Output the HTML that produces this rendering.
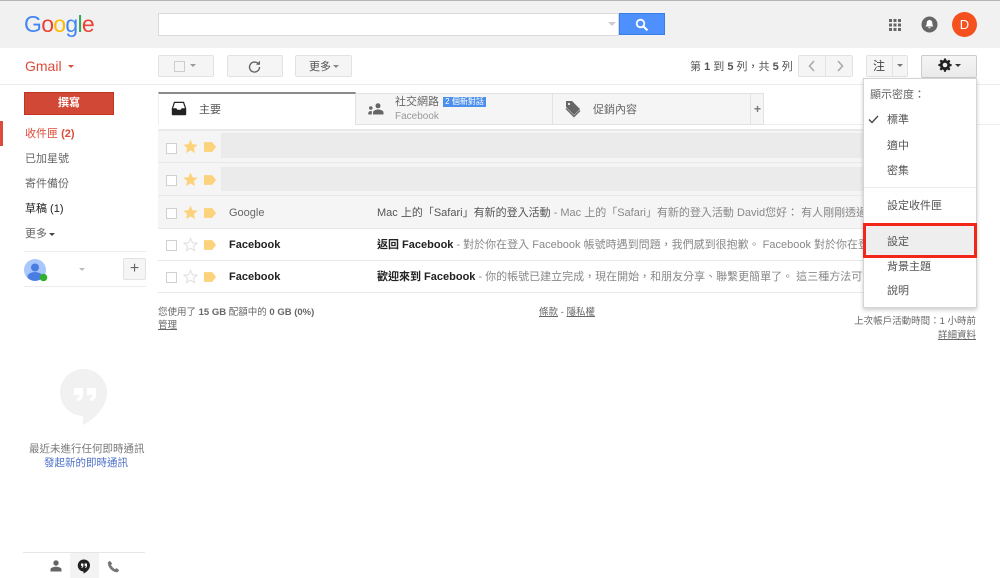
<!DOCTYPE html>
<html lang="zh-Hant"><head><meta charset="utf-8"><title>Gmail</title>
<style>
html,body{margin:0;padding:0;background:#fff}
body{width:1000px;height:578px;position:relative;overflow:hidden;font-family:"Liberation Sans","Noto Sans CJK TC",sans-serif;font-size:11px;color:#444}
.a{position:absolute}
.t{position:absolute;white-space:nowrap;line-height:14px}
.b{position:absolute;box-sizing:border-box;border:1px solid #e2e2e2;background:#f5f5f5;border-radius:2px}
.arr{position:absolute;width:0;height:0;border-left:3px solid transparent;border-right:3px solid transparent;border-top:3px solid #777}
.row{position:absolute;left:158px;width:706px;box-sizing:border-box;border-bottom:1px solid #e8e8e8}
.cb{position:absolute;left:8px;width:9px;height:9px;border:1px solid #d0d0d0;background:#fff}
.star{position:absolute;left:25px}
.lb{position:absolute;left:46px}
.g{color:#888}
.m{left:887px;color:#555;font-size:11px}
.f{color:#666;font-size:9.5px}
u{text-decoration:underline}
</style></head><body>
<div class="a" style="left:0;top:0;width:1000px;height:48px;background:#f1f1f1;border-top:1px solid #b5b5b5;box-sizing:border-box"></div>
<div class="t" style="left:24px;top:9px;font-size:23px;line-height:30px;letter-spacing:-.7px"><span style="color:#4285f4">G</span><span style="color:#ea4335">o</span><span style="color:#fbbc05">o</span><span style="color:#4285f4">g</span><span style="color:#34a853">l</span><span style="color:#ea4335">e</span></div>

<div class="a" style="left:158px;top:13px;width:461px;height:23px;background:#fff;border:1px solid #d9d9d9;box-sizing:border-box"></div>
<div class="arr" style="left:608px;top:22px;border-top-color:#ccc;border-left-width:4px;border-right-width:4px;border-top-width:4px"></div>
<div class="a" style="left:619px;top:13px;width:46px;height:22px;background:#4d90fe;border:1px solid #3b7de8;box-sizing:border-box"></div>
<svg class="a" style="left:635px;top:18px" width="14" height="14" viewBox="0 0 14 14"><circle cx="5.500" cy="5.500" r="3.800" fill="none" stroke="#fff" stroke-width="1.800"/><path d="M8.400 8.400L12.400 12.400" stroke="#fff" stroke-width="2.200"/></svg>

<svg class="a" style="left:888px;top:18px" width="14" height="14" viewBox="0 0 14 14" fill="#666"><path d="M1 1h3v3H1zM5.500 1h3v3h-3zM10 1h3v3h-3zM1 5.500h3v3H1zM5.500 5.500h3v3h-3zM10 5.500h3v3h-3zM1 10h3v3H1zM5.500 10h3v3h-3zM10 10h3v3h-3z"/></svg>
<svg class="a" style="left:921px;top:16px" width="17" height="17" viewBox="0 0 17 17"><circle cx="8.500" cy="8.500" r="8" fill="#666"/><path d="M8.500 4c-2 0-2.800 1.500-2.800 3.300 0 1.700-.7 2.500-1.200 3.200h8c-.5-.7-1.200-1.500-1.200-3.200C11.300 5.500 10.500 4 8.500 4z" fill="#fff"/><path d="M7.300 11.200h2.400a1.200 1.200 0 0 1-2.400 0z" fill="#fff"/></svg>
<div class="a" style="left:952px;top:12px;width:25px;height:25px;border-radius:50%;background:#f4511e;color:#fff;font-size:13px;line-height:25px;text-align:center">D</div>

<div class="t" style="left:25px;top:57px;font-size:14px;line-height:18px;color:#dd4b39">Gmail</div>
<div class="arr" style="left:68px;top:65px;border-top-color:#dd4b39"></div>
<div class="a" style="left:0;top:84px;width:1000px;height:1px;background:#ebebeb"></div>

<div class="b" style="left:158px;top:55px;width:56px;height:22px"></div>
<div class="a" style="left:174px;top:61px;width:9px;height:9px;border:1px solid #ccc;background:#f5f5f5"></div>
<div class="arr" style="left:190px;top:64px;border-top-color:#999"></div>
<div class="b" style="left:227px;top:55px;width:56px;height:22px"></div>
<svg class="a" style="left:248px;top:60px" width="13" height="13" viewBox="0 0 13 13"><path d="M10.800 4.500A5 5 0 1 0 11.500 7" fill="none" stroke="#666" stroke-width="1.400"/><path d="M8 4.800h4V.8z" fill="#666"/></svg>
<div class="b" style="left:295px;top:55px;width:57px;height:22px"></div>
<div class="t" style="left:309px;top:60px;color:#555">更多</div>
<div class="arr" style="left:333px;top:65px;border-top-color:#888"></div>

<div class="t" style="left:690px;top:60px;color:#555;font-size:11px">第 <b>1</b> 到 <b>5</b> 列，共 <b>5</b> 列</div>
<div class="b" style="left:798px;top:55px;width:55px;height:22px"></div>
<div class="a" style="left:825px;top:55px;width:1px;height:22px;background:#e2e2e2"></div>
<svg class="a" style="left:807px;top:60px" width="38" height="12" viewBox="0 0 38 12" fill="none" stroke="#aaa" stroke-width="1.600"><path d="M7 1L2.500 6 7 11M31 1l4.500 5-4.500 5"/></svg>
<div class="b" style="left:866px;top:55px;width:42px;height:22px"></div>
<div class="a" style="left:892px;top:55px;width:1px;height:22px;background:#e2e2e2"></div>
<div class="t" style="left:873px;top:59px;font-size:12px;color:#444">注</div>
<div class="arr" style="left:897px;top:64px"></div>
<div class="b" style="left:921px;top:55px;width:56px;height:23px;border-color:#ccc;background:linear-gradient(#f5f5f5,#eaeaea)"></div>
<svg class="a" style="left:938px;top:58px" width="14" height="14" viewBox="0 0 14 14"><path d="M6 .5h2l.3 1.700 1.200.5 1.500-1 1.400 1.400-1 1.500.5 1.200 1.700.3v2l-1.700.3-.5 1.200 1 1.500-1.400 1.400-1.500-1-1.200.5-.3 1.700H6l-.3-1.700-1.200-.5-1.500 1-1.400-1.400 1-1.500-.5-1.200L.4 8V6l1.700-.3.500-1.200-1-1.500L3 1.600l1.500 1 1.200-.5z" fill="#222"/><circle cx="7" cy="7" r="2.300" fill="#f0f0f0"/></svg>
<div class="arr" style="left:955px;top:64px;border-top-color:#333"></div>

<!-- sidebar -->
<div class="a" style="left:24px;top:92px;width:90px;height:23px;background:#d14836;border:1px solid #c23321;box-sizing:border-box;color:#fff;font-weight:bold;text-align:center;line-height:21px;font-size:11px">撰寫</div>
<div class="a" style="left:0;top:121px;width:3px;height:25px;background:#dd4b39"></div>
<div class="t" style="left:25px;top:127px;color:#dd4b39">收件匣 <b>(2)</b></div>
<div class="t" style="left:25px;top:152px;color:#666">已加星號</div>
<div class="t" style="left:25px;top:177px;color:#666">寄件備份</div>
<div class="t" style="left:25px;top:202px;color:#222">草稿 (1)</div>
<div class="t" style="left:25px;top:227px;color:#666">更多</div>
<div class="arr" style="left:49px;top:233px;border-top-color:#444"></div>
<div class="a" style="left:24px;top:251px;width:122px;height:1px;background:#ececec"></div>
<div class="a" style="left:24px;top:286px;width:122px;height:1px;background:#ececec"></div>
<svg class="a" style="left:23px;top:258px" width="27" height="26" viewBox="0 0 27 26"><defs><clipPath id="c"><circle cx="12" cy="12" r="11"/></clipPath></defs><circle cx="12" cy="12" r="11" fill="#a8c7fa"/><g clip-path="url(#c)" fill="#4a7de0"><circle cx="12" cy="9.500" r="4"/><ellipse cx="12" cy="18.500" rx="7.500" ry="4.500"/></g><circle cx="20.500" cy="19.500" r="3.800" fill="#2fb12f"/></svg>
<div class="arr" style="left:79px;top:268px;border-top-color:#bbb"></div>
<div class="b" style="left:123px;top:258px;width:23px;height:22px;font-size:16px;line-height:20px;color:#666;text-align:center">+</div>

<svg class="a" style="left:60px;top:368px" width="48" height="58" viewBox="0 0 48 58"><path d="M24 1a23.500 23.500 0 0 0-1 47v9c10-5 24-17 24-32.500A23.500 23.500 0 0 0 24 1z" fill="#f1f1f1"/><path d="M14 20h9v7c0 4-3 6-6 6v-3c1.500 0 2.500-1 2.500-3H14zM27 20h9v7c0 4-3 6-6 6v-3c1.500 0 2.500-1 2.500-3H27z" fill="#fff"/></svg>
<div class="t" style="left:29px;top:442px;color:#777;font-size:10.500px">最近未進行任何即時通訊</div>
<div class="t" style="left:44px;top:456px;color:#4d6fc9;font-size:10.500px">發起新的即時通訊</div>
<div class="a" style="left:23px;top:552px;width:122px;height:1px;background:#e6e6e6"></div>
<div class="a" style="left:70px;top:553px;width:29px;height:25px;background:#f3f3f3"></div>
<svg class="a" style="left:49px;top:560px" width="14" height="12" viewBox="0 0 14 12" fill="#666"><circle cx="7" cy="3" r="2.700"/><path d="M1.500 11.500V9.500C1.500 7.500 5 6.800 7 6.800s5.500.7 5.500 2.700v2z"/></svg>
<svg class="a" style="left:77px;top:559px" width="14" height="15" viewBox="0 0 14 15"><path d="M7 .5a6 6 0 0 0-.5 12v2c3-1.200 6.500-4.500 6.500-8A6 6 0 0 0 7 .5z" fill="#222"/><path d="M4 4.500h2.400v2.400c0 1.400-1 2-1.900 2v-1c.5 0 .8-.3.800-1H4zM7.600 4.500H10v2.400c0 1.400-1 2-1.900 2v-1c.5 0 .8-.3.800-1H7.600z" fill="#fff"/></svg>
<svg class="a" style="left:107px;top:560px" width="13" height="13" viewBox="0 0 13 13"><path d="M2.800.8L.8 2.500c0 5 4.500 9.800 9.700 9.800l1.800-2-2.800-2.300-1.500 1.200C6.500 8.300 4.800 6.500 4 5l1.200-1.500z" fill="#777"/></svg>

<!-- tabs -->
<div class="a" style="left:158px;top:92px;width:198px;height:33px;background:#fff;border-top:2px solid #8a8a8a;border-left:1px solid #eee;border-right:1px solid #e2e2e2;box-sizing:border-box"></div>
<div class="a" style="left:356px;top:93px;width:408px;height:32px;background:#f5f5f5;border:1px solid #e2e2e2;border-left:none;box-sizing:border-box"></div>
<div class="a" style="left:552px;top:93px;width:1px;height:32px;background:#e2e2e2"></div>
<div class="a" style="left:750px;top:93px;width:1px;height:32px;background:#e2e2e2"></div>
<div class="a" style="left:764px;top:124px;width:236px;height:1px;background:#eee"></div>
<svg class="a" style="left:171px;top:101px" width="16" height="15" viewBox="0 0 16 15"><path d="M3 .8h10l2.200 6.700v5.500a1.300 1.300 0 0 1-1.300 1.300H2.100A1.300 1.300 0 0 1 .8 13V7.500z" fill="#222"/><path d="M3.900 2h8.200l1.800 5.200h-3.300l-.9 1.600H6.300l-.9-1.600H2.100z" fill="#fff"/></svg>
<div class="t" style="left:199px;top:103px;color:#555">主要</div>
<svg class="a" style="left:368px;top:103px" width="16" height="12" viewBox="0 0 16 12" fill="#666"><circle cx="10" cy="2.800" r="2.500"/><path d="M5 11.500V9.500C5 7.300 8.500 6.500 10 6.500s5.500.8 5.500 3v2z"/><circle cx="2.800" cy="5" r="1.800"/><path d="M.3 11.500V10c0-1.400 1.500-2 3.500-2v3.500z"/></svg>
<div class="t" style="left:395px;top:95px;color:#666">社交網路</div>
<div class="a" style="left:443px;top:97px;width:43px;height:10px;background:#4d8fec;color:#fff;font-size:8px;line-height:10px;text-align:center;white-space:nowrap;overflow:hidden">2 個新對話</div>
<div class="t" style="left:395px;top:110px;color:#999;font-size:10px">Facebook</div>
<svg class="a" style="left:565px;top:100px" width="17" height="18" viewBox="0 0 17 18"><path d="M1 1h6l8 8-6 6-8-8z" fill="#666"/><circle cx="4" cy="4" r="1.100" fill="#f5f5f5"/><path d="M1 8.500l8 8 6-6" fill="none" stroke="#666" stroke-width="1.400"/></svg>
<div class="t" style="left:593px;top:103px;color:#666">促銷內容</div>
<div class="a" style="left:751px;top:93px;width:13px;height:32px;color:#777;font-weight:bold;font-size:12px;line-height:32px;text-align:center">+</div>

<!-- rows -->
<div class="a" style="left:158px;top:129px;width:706px;height:2px;background:#e9e9e9"></div>
<div class="row" style="top:131px;height:32px;background:#f5f5f5"><div class="cb" style="top:12px"></div><svg class="star" style="top:8px" width="15" height="15" viewBox="0 0 13 13"><path d="M6.500.5l1.800 4.100 4.400.4-3.300 2.900 1 4.300-3.900-2.300-3.900 2.300 1-4.300L.3 5l4.400-.4z" fill="#fcd27a"/></svg><svg class="lb" style="top:11px" width="12" height="10" viewBox="0 0 11 9"><path d="M0 0h7.500L11 4.500 7.500 9H0z" fill="#fcd27a"/></svg><div class="a" style="left:63px;top:2px;width:643px;height:25px;background:#ebebeb"></div></div>
<div class="row" style="top:163px;height:33px;background:#f5f5f5"><div class="cb" style="top:12px"></div><svg class="star" style="top:9px" width="15" height="15" viewBox="0 0 13 13"><path d="M6.500.5l1.800 4.100 4.400.4-3.300 2.900 1 4.300-3.900-2.300-3.900 2.300 1-4.300L.3 5l4.400-.4z" fill="#fcd27a"/></svg><svg class="lb" style="top:12px" width="12" height="10" viewBox="0 0 11 9"><path d="M0 0h7.500L11 4.500 7.500 9H0z" fill="#fcd27a"/></svg><div class="a" style="left:63px;top:4px;width:643px;height:24px;background:#ebebeb"></div></div>
<div class="row" style="top:196px;height:33px;background:#f5f5f5"><div class="cb" style="top:12px"></div><svg class="star" style="top:9px" width="15" height="15" viewBox="0 0 13 13"><path d="M6.500.5l1.800 4.100 4.400.4-3.300 2.900 1 4.300-3.900-2.300-3.900 2.300 1-4.300L.3 5l4.400-.4z" fill="#fcd27a"/></svg><svg class="lb" style="top:12px" width="12" height="10" viewBox="0 0 11 9"><path d="M0 0h7.500L11 4.500 7.500 9H0z" fill="#fcd27a"/></svg></div>
<div class="t" style="left:229px;top:206px;color:#666">Google</div>
<div class="t" style="left:377px;top:206px;width:487px;overflow:hidden;color:#555">Mac 上的「Safari」有新的登入活動<span class="g"> - Mac 上的「Safari」有新的登入活動 David您好： 有人剛剛透過</span></div>
<div class="row" style="top:229px;height:32px;background:#fff"><div class="cb" style="top:11px"></div><svg class="star" style="top:8px" width="15" height="15" viewBox="0 0 13 13"><path d="M6.500 1.200l1.600 3.700 4 .4-3 2.600.9 3.900-3.500-2.100-3.500 2.100.9-3.900-3-2.600 4-.4z" fill="#fff" stroke="#e2e2e2"/></svg><svg class="lb" style="top:11px" width="12" height="10" viewBox="0 0 11 9"><path d="M0 0h7.500L11 4.500 7.500 9H0z" fill="#fcd27a"/></svg></div>
<div class="t" style="left:229px;top:238px;color:#222;font-weight:bold">Facebook</div>
<div class="t" style="left:377px;top:238px;width:487px;overflow:hidden;color:#222"><b>返回 Facebook</b><span class="g"> - 對於你在登入 Facebook 帳號時遇到問題，我們感到很抱歉。 Facebook 對於你在登</span></div>
<div class="row" style="top:261px;height:32px;background:#fff"><div class="cb" style="top:11px"></div><svg class="star" style="top:8px" width="15" height="15" viewBox="0 0 13 13"><path d="M6.500 1.200l1.600 3.700 4 .4-3 2.600.9 3.900-3.500-2.100-3.500 2.100.9-3.900-3-2.600 4-.4z" fill="#fff" stroke="#e2e2e2"/></svg><svg class="lb" style="top:11px" width="12" height="10" viewBox="0 0 11 9"><path d="M0 0h7.500L11 4.500 7.500 9H0z" fill="#fcd27a"/></svg></div>
<div class="t" style="left:229px;top:270px;color:#222;font-weight:bold">Facebook</div>
<div class="t" style="left:377px;top:270px;width:487px;overflow:hidden;color:#222"><b>歡迎來到 Facebook</b><span class="g"> - 你的帳號已建立完成，現在開始，和朋友分享、聯繫更簡單了。 這三種方法可讓</span></div>

<div class="t f" style="left:158px;top:306px">您使用了 <b>15 GB</b> 配額中的 <b>0 GB</b> <b>(0%)</b></div>
<div class="t f" style="left:158px;top:319px"><u>管理</u></div>
<div class="t f" style="left:539px;top:306px"><u>條款</u> - <u>隱私權</u></div>
<div class="t f" style="right:24px;top:315px">上次帳戶活動時間：1 小時前</div>
<div class="t f" style="right:24px;top:329px"><u>詳細資料</u></div>

<!-- menu -->
<div class="a" style="left:863px;top:78px;width:114px;height:230px;background:#fff;border:1px solid #d5d5d5;box-sizing:border-box;box-shadow:0 2px 4px rgba(0,0,0,.2)"></div>
<div class="t" style="left:870px;top:88px;color:#666">顯示密度：</div>
<svg class="a" style="left:868px;top:115px" width="11" height="9" viewBox="0 0 11 9"><path d="M1 4.500l3 3 6-6.500" fill="none" stroke="#444" stroke-width="1.300"/></svg>
<div class="t m" style="top:113px">標準</div>
<div class="t m" style="top:139px">適中</div>
<div class="t m" style="top:164px">密集</div>
<div class="a" style="left:864px;top:187px;width:112px;height:1px;background:#ebebeb"></div>
<div class="t m" style="top:199px">設定收件匣</div>
<div class="a" style="left:863px;top:223px;width:114px;height:35px;box-sizing:border-box;border:3px solid #f4261a;background:#eeeeee"></div>
<div class="t m" style="top:235px">設定</div>
<div class="t m" style="top:260px">背景主題</div>
<div class="t m" style="top:284px">說明</div>
</body></html>
